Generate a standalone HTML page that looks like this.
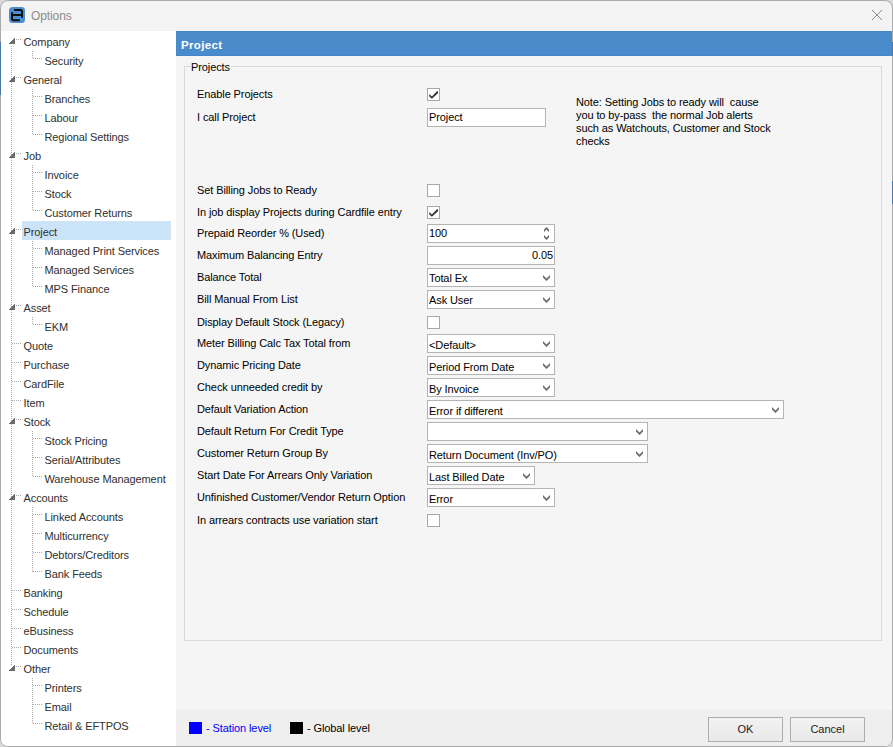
<!DOCTYPE html>
<html><head><meta charset="utf-8"><style>
*{margin:0;padding:0;box-sizing:border-box}
html,body{width:893px;height:747px;overflow:hidden;background:#d9d9d9;font-family:"Liberation Sans", sans-serif}
.t{position:absolute;white-space:pre;font-family:"Liberation Sans", sans-serif;letter-spacing:-0.1px}
#win{position:absolute;left:0;top:0;width:893px;height:747px;border:1px solid #ababab;border-radius:8px;overflow:hidden;background:#f3f3f3}
#tree{position:absolute;left:0;top:30px;width:175px;height:716px;background:#fff}
#panel{position:absolute;left:175px;top:30px;width:716px;height:679px;background:#f5f5f5}
#foot{position:absolute;left:175px;top:709px;width:716px;height:36px;background:#efefef}
.cb{position:absolute;width:13px;height:13px;border:1px solid #a8a8a8;background:#fff}
.in{position:absolute;height:19px;border:1px solid #b4b4b4;background:#fff}
.btn{position:absolute;width:75px;height:25px;border:1px solid #adadad;background:linear-gradient(#f2f2f2,#e9e9e9);font-size:11px;line-height:23px;text-align:center;color:#222}
</style></head><body>
<div id="win">
 <svg style="position:absolute;left:8px;top:6px" width="16" height="16" viewBox="0 0 16 16">
  <rect x="0" y="0" width="16" height="16" rx="3.5" fill="#4a8fd3"/>
  <path d="M5 3 H11.5 Q13 3 13 4.5 V10.8 M2.5 8 H12.5 M3 5.2 V11.5 Q3 13.2 4.8 13.2 H10.8" fill="none" stroke="#0a0f0a" stroke-width="2"/>
 </svg>
 <div class="t" style="left:30px;top:8px;font-size:12px;line-height:14px;color:#8c8c8c">Options</div>
 <svg style="position:absolute;left:870px;top:8px" width="12" height="12"><path d="M1 1 L11 11 M11 1 L1 11" stroke="#8a8a8a" stroke-width="1"/></svg>
 <div id="tree"></div>

 <div id="panel"></div>
 <div id="foot"></div>
</div>
<div id="content" style="position:absolute;left:0;top:0;width:893px;height:747px">
<div style="position:absolute;left:0;top:42px;width:1px;height:53px;background:#4a78ad"></div>
<div style="position:absolute;left:892px;top:42px;width:1px;height:14px;background:#4a78ad"></div>
<div style="position:absolute;left:892px;top:181px;width:1px;height:23px;background:#4a78ad"></div>
<div style="position:absolute;left:22px;top:221px;width:149px;height:19px;background:#cce4f7"></div><div class="t" style="left:23.5px;top:36px;font-size:11px;line-height:12px;color:#303030;font-weight:normal;">Company</div><div class="t" style="left:44.5px;top:55px;font-size:11px;line-height:12px;color:#303030;font-weight:normal;">Security</div><div class="t" style="left:23.5px;top:74px;font-size:11px;line-height:12px;color:#303030;font-weight:normal;">General</div><div class="t" style="left:44.5px;top:93px;font-size:11px;line-height:12px;color:#303030;font-weight:normal;">Branches</div><div class="t" style="left:44.5px;top:112px;font-size:11px;line-height:12px;color:#303030;font-weight:normal;">Labour</div><div class="t" style="left:44.5px;top:131px;font-size:11px;line-height:12px;color:#303030;font-weight:normal;">Regional Settings</div><div class="t" style="left:23.5px;top:150px;font-size:11px;line-height:12px;color:#303030;font-weight:normal;">Job</div><div class="t" style="left:44.5px;top:169px;font-size:11px;line-height:12px;color:#303030;font-weight:normal;">Invoice</div><div class="t" style="left:44.5px;top:188px;font-size:11px;line-height:12px;color:#303030;font-weight:normal;">Stock</div><div class="t" style="left:44.5px;top:207px;font-size:11px;line-height:12px;color:#303030;font-weight:normal;">Customer Returns</div><div class="t" style="left:23.5px;top:226px;font-size:11px;line-height:12px;color:#303030;font-weight:normal;">Project</div><div class="t" style="left:44.5px;top:245px;font-size:11px;line-height:12px;color:#303030;font-weight:normal;">Managed Print Services</div><div class="t" style="left:44.5px;top:264px;font-size:11px;line-height:12px;color:#303030;font-weight:normal;">Managed Services</div><div class="t" style="left:44.5px;top:283px;font-size:11px;line-height:12px;color:#303030;font-weight:normal;">MPS Finance</div><div class="t" style="left:23.5px;top:302px;font-size:11px;line-height:12px;color:#303030;font-weight:normal;">Asset</div><div class="t" style="left:44.5px;top:321px;font-size:11px;line-height:12px;color:#303030;font-weight:normal;">EKM</div><div class="t" style="left:23.5px;top:340px;font-size:11px;line-height:12px;color:#303030;font-weight:normal;">Quote</div><div class="t" style="left:23.5px;top:359px;font-size:11px;line-height:12px;color:#303030;font-weight:normal;">Purchase</div><div class="t" style="left:23.5px;top:378px;font-size:11px;line-height:12px;color:#303030;font-weight:normal;">CardFile</div><div class="t" style="left:23.5px;top:397px;font-size:11px;line-height:12px;color:#303030;font-weight:normal;">Item</div><div class="t" style="left:23.5px;top:416px;font-size:11px;line-height:12px;color:#303030;font-weight:normal;">Stock</div><div class="t" style="left:44.5px;top:435px;font-size:11px;line-height:12px;color:#303030;font-weight:normal;">Stock Pricing</div><div class="t" style="left:44.5px;top:454px;font-size:11px;line-height:12px;color:#303030;font-weight:normal;">Serial/Attributes</div><div class="t" style="left:44.5px;top:473px;font-size:11px;line-height:12px;color:#303030;font-weight:normal;">Warehouse Management</div><div class="t" style="left:23.5px;top:492px;font-size:11px;line-height:12px;color:#303030;font-weight:normal;">Accounts</div><div class="t" style="left:44.5px;top:511px;font-size:11px;line-height:12px;color:#303030;font-weight:normal;">Linked Accounts</div><div class="t" style="left:44.5px;top:530px;font-size:11px;line-height:12px;color:#303030;font-weight:normal;">Multicurrency</div><div class="t" style="left:44.5px;top:549px;font-size:11px;line-height:12px;color:#303030;font-weight:normal;">Debtors/Creditors</div><div class="t" style="left:44.5px;top:568px;font-size:11px;line-height:12px;color:#303030;font-weight:normal;">Bank Feeds</div><div class="t" style="left:23.5px;top:587px;font-size:11px;line-height:12px;color:#303030;font-weight:normal;">Banking</div><div class="t" style="left:23.5px;top:606px;font-size:11px;line-height:12px;color:#303030;font-weight:normal;">Schedule</div><div class="t" style="left:23.5px;top:625px;font-size:11px;line-height:12px;color:#303030;font-weight:normal;">eBusiness</div><div class="t" style="left:23.5px;top:644px;font-size:11px;line-height:12px;color:#303030;font-weight:normal;">Documents</div><div class="t" style="left:23.5px;top:663px;font-size:11px;line-height:12px;color:#303030;font-weight:normal;">Other</div><div class="t" style="left:44.5px;top:682px;font-size:11px;line-height:12px;color:#303030;font-weight:normal;">Printers</div><div class="t" style="left:44.5px;top:701px;font-size:11px;line-height:12px;color:#303030;font-weight:normal;">Email</div><div class="t" style="left:44.5px;top:720px;font-size:11px;line-height:12px;color:#303030;font-weight:normal;">Retail &amp; EFTPOS</div><svg style="position:absolute;left:0;top:0" width="176" height="747" shape-rendering="crispEdges"><g fill="#aaaaaa"><rect x="16" y="39" width="1" height="1"/><rect x="18" y="39" width="1" height="1"/><rect x="20" y="39" width="1" height="1"/><rect x="33" y="58" width="1" height="1"/><rect x="35" y="58" width="1" height="1"/><rect x="37" y="58" width="1" height="1"/><rect x="39" y="58" width="1" height="1"/><rect x="41" y="58" width="1" height="1"/><rect x="16" y="77" width="1" height="1"/><rect x="18" y="77" width="1" height="1"/><rect x="20" y="77" width="1" height="1"/><rect x="33" y="96" width="1" height="1"/><rect x="35" y="96" width="1" height="1"/><rect x="37" y="96" width="1" height="1"/><rect x="39" y="96" width="1" height="1"/><rect x="41" y="96" width="1" height="1"/><rect x="33" y="115" width="1" height="1"/><rect x="35" y="115" width="1" height="1"/><rect x="37" y="115" width="1" height="1"/><rect x="39" y="115" width="1" height="1"/><rect x="41" y="115" width="1" height="1"/><rect x="33" y="134" width="1" height="1"/><rect x="35" y="134" width="1" height="1"/><rect x="37" y="134" width="1" height="1"/><rect x="39" y="134" width="1" height="1"/><rect x="41" y="134" width="1" height="1"/><rect x="16" y="153" width="1" height="1"/><rect x="18" y="153" width="1" height="1"/><rect x="20" y="153" width="1" height="1"/><rect x="33" y="172" width="1" height="1"/><rect x="35" y="172" width="1" height="1"/><rect x="37" y="172" width="1" height="1"/><rect x="39" y="172" width="1" height="1"/><rect x="41" y="172" width="1" height="1"/><rect x="33" y="191" width="1" height="1"/><rect x="35" y="191" width="1" height="1"/><rect x="37" y="191" width="1" height="1"/><rect x="39" y="191" width="1" height="1"/><rect x="41" y="191" width="1" height="1"/><rect x="33" y="210" width="1" height="1"/><rect x="35" y="210" width="1" height="1"/><rect x="37" y="210" width="1" height="1"/><rect x="39" y="210" width="1" height="1"/><rect x="41" y="210" width="1" height="1"/><rect x="16" y="229" width="1" height="1"/><rect x="18" y="229" width="1" height="1"/><rect x="20" y="229" width="1" height="1"/><rect x="33" y="248" width="1" height="1"/><rect x="35" y="248" width="1" height="1"/><rect x="37" y="248" width="1" height="1"/><rect x="39" y="248" width="1" height="1"/><rect x="41" y="248" width="1" height="1"/><rect x="33" y="267" width="1" height="1"/><rect x="35" y="267" width="1" height="1"/><rect x="37" y="267" width="1" height="1"/><rect x="39" y="267" width="1" height="1"/><rect x="41" y="267" width="1" height="1"/><rect x="33" y="286" width="1" height="1"/><rect x="35" y="286" width="1" height="1"/><rect x="37" y="286" width="1" height="1"/><rect x="39" y="286" width="1" height="1"/><rect x="41" y="286" width="1" height="1"/><rect x="16" y="305" width="1" height="1"/><rect x="18" y="305" width="1" height="1"/><rect x="20" y="305" width="1" height="1"/><rect x="33" y="324" width="1" height="1"/><rect x="35" y="324" width="1" height="1"/><rect x="37" y="324" width="1" height="1"/><rect x="39" y="324" width="1" height="1"/><rect x="41" y="324" width="1" height="1"/><rect x="12" y="343" width="1" height="1"/><rect x="14" y="343" width="1" height="1"/><rect x="16" y="343" width="1" height="1"/><rect x="18" y="343" width="1" height="1"/><rect x="20" y="343" width="1" height="1"/><rect x="12" y="362" width="1" height="1"/><rect x="14" y="362" width="1" height="1"/><rect x="16" y="362" width="1" height="1"/><rect x="18" y="362" width="1" height="1"/><rect x="20" y="362" width="1" height="1"/><rect x="12" y="381" width="1" height="1"/><rect x="14" y="381" width="1" height="1"/><rect x="16" y="381" width="1" height="1"/><rect x="18" y="381" width="1" height="1"/><rect x="20" y="381" width="1" height="1"/><rect x="12" y="400" width="1" height="1"/><rect x="14" y="400" width="1" height="1"/><rect x="16" y="400" width="1" height="1"/><rect x="18" y="400" width="1" height="1"/><rect x="20" y="400" width="1" height="1"/><rect x="16" y="419" width="1" height="1"/><rect x="18" y="419" width="1" height="1"/><rect x="20" y="419" width="1" height="1"/><rect x="33" y="438" width="1" height="1"/><rect x="35" y="438" width="1" height="1"/><rect x="37" y="438" width="1" height="1"/><rect x="39" y="438" width="1" height="1"/><rect x="41" y="438" width="1" height="1"/><rect x="33" y="457" width="1" height="1"/><rect x="35" y="457" width="1" height="1"/><rect x="37" y="457" width="1" height="1"/><rect x="39" y="457" width="1" height="1"/><rect x="41" y="457" width="1" height="1"/><rect x="33" y="476" width="1" height="1"/><rect x="35" y="476" width="1" height="1"/><rect x="37" y="476" width="1" height="1"/><rect x="39" y="476" width="1" height="1"/><rect x="41" y="476" width="1" height="1"/><rect x="16" y="495" width="1" height="1"/><rect x="18" y="495" width="1" height="1"/><rect x="20" y="495" width="1" height="1"/><rect x="33" y="514" width="1" height="1"/><rect x="35" y="514" width="1" height="1"/><rect x="37" y="514" width="1" height="1"/><rect x="39" y="514" width="1" height="1"/><rect x="41" y="514" width="1" height="1"/><rect x="33" y="533" width="1" height="1"/><rect x="35" y="533" width="1" height="1"/><rect x="37" y="533" width="1" height="1"/><rect x="39" y="533" width="1" height="1"/><rect x="41" y="533" width="1" height="1"/><rect x="33" y="552" width="1" height="1"/><rect x="35" y="552" width="1" height="1"/><rect x="37" y="552" width="1" height="1"/><rect x="39" y="552" width="1" height="1"/><rect x="41" y="552" width="1" height="1"/><rect x="33" y="571" width="1" height="1"/><rect x="35" y="571" width="1" height="1"/><rect x="37" y="571" width="1" height="1"/><rect x="39" y="571" width="1" height="1"/><rect x="41" y="571" width="1" height="1"/><rect x="12" y="590" width="1" height="1"/><rect x="14" y="590" width="1" height="1"/><rect x="16" y="590" width="1" height="1"/><rect x="18" y="590" width="1" height="1"/><rect x="20" y="590" width="1" height="1"/><rect x="12" y="609" width="1" height="1"/><rect x="14" y="609" width="1" height="1"/><rect x="16" y="609" width="1" height="1"/><rect x="18" y="609" width="1" height="1"/><rect x="20" y="609" width="1" height="1"/><rect x="12" y="628" width="1" height="1"/><rect x="14" y="628" width="1" height="1"/><rect x="16" y="628" width="1" height="1"/><rect x="18" y="628" width="1" height="1"/><rect x="20" y="628" width="1" height="1"/><rect x="12" y="647" width="1" height="1"/><rect x="14" y="647" width="1" height="1"/><rect x="16" y="647" width="1" height="1"/><rect x="18" y="647" width="1" height="1"/><rect x="20" y="647" width="1" height="1"/><rect x="16" y="666" width="1" height="1"/><rect x="18" y="666" width="1" height="1"/><rect x="20" y="666" width="1" height="1"/><rect x="33" y="685" width="1" height="1"/><rect x="35" y="685" width="1" height="1"/><rect x="37" y="685" width="1" height="1"/><rect x="39" y="685" width="1" height="1"/><rect x="41" y="685" width="1" height="1"/><rect x="33" y="704" width="1" height="1"/><rect x="35" y="704" width="1" height="1"/><rect x="37" y="704" width="1" height="1"/><rect x="39" y="704" width="1" height="1"/><rect x="41" y="704" width="1" height="1"/><rect x="33" y="723" width="1" height="1"/><rect x="35" y="723" width="1" height="1"/><rect x="37" y="723" width="1" height="1"/><rect x="39" y="723" width="1" height="1"/><rect x="41" y="723" width="1" height="1"/><rect x="11" y="46" width="1" height="1"/><rect x="11" y="48" width="1" height="1"/><rect x="11" y="50" width="1" height="1"/><rect x="11" y="52" width="1" height="1"/><rect x="11" y="54" width="1" height="1"/><rect x="11" y="56" width="1" height="1"/><rect x="11" y="58" width="1" height="1"/><rect x="11" y="60" width="1" height="1"/><rect x="11" y="62" width="1" height="1"/><rect x="11" y="64" width="1" height="1"/><rect x="11" y="66" width="1" height="1"/><rect x="11" y="68" width="1" height="1"/><rect x="11" y="70" width="1" height="1"/><rect x="11" y="72" width="1" height="1"/><rect x="11" y="74" width="1" height="1"/><rect x="11" y="76" width="1" height="1"/><rect x="11" y="78" width="1" height="1"/><rect x="11" y="80" width="1" height="1"/><rect x="11" y="82" width="1" height="1"/><rect x="11" y="84" width="1" height="1"/><rect x="11" y="86" width="1" height="1"/><rect x="11" y="88" width="1" height="1"/><rect x="11" y="90" width="1" height="1"/><rect x="11" y="92" width="1" height="1"/><rect x="11" y="94" width="1" height="1"/><rect x="11" y="96" width="1" height="1"/><rect x="11" y="98" width="1" height="1"/><rect x="11" y="100" width="1" height="1"/><rect x="11" y="102" width="1" height="1"/><rect x="11" y="104" width="1" height="1"/><rect x="11" y="106" width="1" height="1"/><rect x="11" y="108" width="1" height="1"/><rect x="11" y="110" width="1" height="1"/><rect x="11" y="112" width="1" height="1"/><rect x="11" y="114" width="1" height="1"/><rect x="11" y="116" width="1" height="1"/><rect x="11" y="118" width="1" height="1"/><rect x="11" y="120" width="1" height="1"/><rect x="11" y="122" width="1" height="1"/><rect x="11" y="124" width="1" height="1"/><rect x="11" y="126" width="1" height="1"/><rect x="11" y="128" width="1" height="1"/><rect x="11" y="130" width="1" height="1"/><rect x="11" y="132" width="1" height="1"/><rect x="11" y="134" width="1" height="1"/><rect x="11" y="136" width="1" height="1"/><rect x="11" y="138" width="1" height="1"/><rect x="11" y="140" width="1" height="1"/><rect x="11" y="142" width="1" height="1"/><rect x="11" y="144" width="1" height="1"/><rect x="11" y="146" width="1" height="1"/><rect x="11" y="148" width="1" height="1"/><rect x="11" y="150" width="1" height="1"/><rect x="11" y="152" width="1" height="1"/><rect x="11" y="154" width="1" height="1"/><rect x="11" y="156" width="1" height="1"/><rect x="11" y="158" width="1" height="1"/><rect x="11" y="160" width="1" height="1"/><rect x="11" y="162" width="1" height="1"/><rect x="11" y="164" width="1" height="1"/><rect x="11" y="166" width="1" height="1"/><rect x="11" y="168" width="1" height="1"/><rect x="11" y="170" width="1" height="1"/><rect x="11" y="172" width="1" height="1"/><rect x="11" y="174" width="1" height="1"/><rect x="11" y="176" width="1" height="1"/><rect x="11" y="178" width="1" height="1"/><rect x="11" y="180" width="1" height="1"/><rect x="11" y="182" width="1" height="1"/><rect x="11" y="184" width="1" height="1"/><rect x="11" y="186" width="1" height="1"/><rect x="11" y="188" width="1" height="1"/><rect x="11" y="190" width="1" height="1"/><rect x="11" y="192" width="1" height="1"/><rect x="11" y="194" width="1" height="1"/><rect x="11" y="196" width="1" height="1"/><rect x="11" y="198" width="1" height="1"/><rect x="11" y="200" width="1" height="1"/><rect x="11" y="202" width="1" height="1"/><rect x="11" y="204" width="1" height="1"/><rect x="11" y="206" width="1" height="1"/><rect x="11" y="208" width="1" height="1"/><rect x="11" y="210" width="1" height="1"/><rect x="11" y="212" width="1" height="1"/><rect x="11" y="214" width="1" height="1"/><rect x="11" y="216" width="1" height="1"/><rect x="11" y="218" width="1" height="1"/><rect x="11" y="220" width="1" height="1"/><rect x="11" y="222" width="1" height="1"/><rect x="11" y="224" width="1" height="1"/><rect x="11" y="226" width="1" height="1"/><rect x="11" y="228" width="1" height="1"/><rect x="11" y="230" width="1" height="1"/><rect x="11" y="232" width="1" height="1"/><rect x="11" y="234" width="1" height="1"/><rect x="11" y="236" width="1" height="1"/><rect x="11" y="238" width="1" height="1"/><rect x="11" y="240" width="1" height="1"/><rect x="11" y="242" width="1" height="1"/><rect x="11" y="244" width="1" height="1"/><rect x="11" y="246" width="1" height="1"/><rect x="11" y="248" width="1" height="1"/><rect x="11" y="250" width="1" height="1"/><rect x="11" y="252" width="1" height="1"/><rect x="11" y="254" width="1" height="1"/><rect x="11" y="256" width="1" height="1"/><rect x="11" y="258" width="1" height="1"/><rect x="11" y="260" width="1" height="1"/><rect x="11" y="262" width="1" height="1"/><rect x="11" y="264" width="1" height="1"/><rect x="11" y="266" width="1" height="1"/><rect x="11" y="268" width="1" height="1"/><rect x="11" y="270" width="1" height="1"/><rect x="11" y="272" width="1" height="1"/><rect x="11" y="274" width="1" height="1"/><rect x="11" y="276" width="1" height="1"/><rect x="11" y="278" width="1" height="1"/><rect x="11" y="280" width="1" height="1"/><rect x="11" y="282" width="1" height="1"/><rect x="11" y="284" width="1" height="1"/><rect x="11" y="286" width="1" height="1"/><rect x="11" y="288" width="1" height="1"/><rect x="11" y="290" width="1" height="1"/><rect x="11" y="292" width="1" height="1"/><rect x="11" y="294" width="1" height="1"/><rect x="11" y="296" width="1" height="1"/><rect x="11" y="298" width="1" height="1"/><rect x="11" y="300" width="1" height="1"/><rect x="11" y="302" width="1" height="1"/><rect x="11" y="304" width="1" height="1"/><rect x="11" y="306" width="1" height="1"/><rect x="11" y="308" width="1" height="1"/><rect x="11" y="310" width="1" height="1"/><rect x="11" y="312" width="1" height="1"/><rect x="11" y="314" width="1" height="1"/><rect x="11" y="316" width="1" height="1"/><rect x="11" y="318" width="1" height="1"/><rect x="11" y="320" width="1" height="1"/><rect x="11" y="322" width="1" height="1"/><rect x="11" y="324" width="1" height="1"/><rect x="11" y="326" width="1" height="1"/><rect x="11" y="328" width="1" height="1"/><rect x="11" y="330" width="1" height="1"/><rect x="11" y="332" width="1" height="1"/><rect x="11" y="334" width="1" height="1"/><rect x="11" y="336" width="1" height="1"/><rect x="11" y="338" width="1" height="1"/><rect x="11" y="340" width="1" height="1"/><rect x="11" y="342" width="1" height="1"/><rect x="11" y="344" width="1" height="1"/><rect x="11" y="346" width="1" height="1"/><rect x="11" y="348" width="1" height="1"/><rect x="11" y="350" width="1" height="1"/><rect x="11" y="352" width="1" height="1"/><rect x="11" y="354" width="1" height="1"/><rect x="11" y="356" width="1" height="1"/><rect x="11" y="358" width="1" height="1"/><rect x="11" y="360" width="1" height="1"/><rect x="11" y="362" width="1" height="1"/><rect x="11" y="364" width="1" height="1"/><rect x="11" y="366" width="1" height="1"/><rect x="11" y="368" width="1" height="1"/><rect x="11" y="370" width="1" height="1"/><rect x="11" y="372" width="1" height="1"/><rect x="11" y="374" width="1" height="1"/><rect x="11" y="376" width="1" height="1"/><rect x="11" y="378" width="1" height="1"/><rect x="11" y="380" width="1" height="1"/><rect x="11" y="382" width="1" height="1"/><rect x="11" y="384" width="1" height="1"/><rect x="11" y="386" width="1" height="1"/><rect x="11" y="388" width="1" height="1"/><rect x="11" y="390" width="1" height="1"/><rect x="11" y="392" width="1" height="1"/><rect x="11" y="394" width="1" height="1"/><rect x="11" y="396" width="1" height="1"/><rect x="11" y="398" width="1" height="1"/><rect x="11" y="400" width="1" height="1"/><rect x="11" y="402" width="1" height="1"/><rect x="11" y="404" width="1" height="1"/><rect x="11" y="406" width="1" height="1"/><rect x="11" y="408" width="1" height="1"/><rect x="11" y="410" width="1" height="1"/><rect x="11" y="412" width="1" height="1"/><rect x="11" y="414" width="1" height="1"/><rect x="11" y="416" width="1" height="1"/><rect x="11" y="418" width="1" height="1"/><rect x="11" y="420" width="1" height="1"/><rect x="11" y="422" width="1" height="1"/><rect x="11" y="424" width="1" height="1"/><rect x="11" y="426" width="1" height="1"/><rect x="11" y="428" width="1" height="1"/><rect x="11" y="430" width="1" height="1"/><rect x="11" y="432" width="1" height="1"/><rect x="11" y="434" width="1" height="1"/><rect x="11" y="436" width="1" height="1"/><rect x="11" y="438" width="1" height="1"/><rect x="11" y="440" width="1" height="1"/><rect x="11" y="442" width="1" height="1"/><rect x="11" y="444" width="1" height="1"/><rect x="11" y="446" width="1" height="1"/><rect x="11" y="448" width="1" height="1"/><rect x="11" y="450" width="1" height="1"/><rect x="11" y="452" width="1" height="1"/><rect x="11" y="454" width="1" height="1"/><rect x="11" y="456" width="1" height="1"/><rect x="11" y="458" width="1" height="1"/><rect x="11" y="460" width="1" height="1"/><rect x="11" y="462" width="1" height="1"/><rect x="11" y="464" width="1" height="1"/><rect x="11" y="466" width="1" height="1"/><rect x="11" y="468" width="1" height="1"/><rect x="11" y="470" width="1" height="1"/><rect x="11" y="472" width="1" height="1"/><rect x="11" y="474" width="1" height="1"/><rect x="11" y="476" width="1" height="1"/><rect x="11" y="478" width="1" height="1"/><rect x="11" y="480" width="1" height="1"/><rect x="11" y="482" width="1" height="1"/><rect x="11" y="484" width="1" height="1"/><rect x="11" y="486" width="1" height="1"/><rect x="11" y="488" width="1" height="1"/><rect x="11" y="490" width="1" height="1"/><rect x="11" y="492" width="1" height="1"/><rect x="11" y="494" width="1" height="1"/><rect x="11" y="496" width="1" height="1"/><rect x="11" y="498" width="1" height="1"/><rect x="11" y="500" width="1" height="1"/><rect x="11" y="502" width="1" height="1"/><rect x="11" y="504" width="1" height="1"/><rect x="11" y="506" width="1" height="1"/><rect x="11" y="508" width="1" height="1"/><rect x="11" y="510" width="1" height="1"/><rect x="11" y="512" width="1" height="1"/><rect x="11" y="514" width="1" height="1"/><rect x="11" y="516" width="1" height="1"/><rect x="11" y="518" width="1" height="1"/><rect x="11" y="520" width="1" height="1"/><rect x="11" y="522" width="1" height="1"/><rect x="11" y="524" width="1" height="1"/><rect x="11" y="526" width="1" height="1"/><rect x="11" y="528" width="1" height="1"/><rect x="11" y="530" width="1" height="1"/><rect x="11" y="532" width="1" height="1"/><rect x="11" y="534" width="1" height="1"/><rect x="11" y="536" width="1" height="1"/><rect x="11" y="538" width="1" height="1"/><rect x="11" y="540" width="1" height="1"/><rect x="11" y="542" width="1" height="1"/><rect x="11" y="544" width="1" height="1"/><rect x="11" y="546" width="1" height="1"/><rect x="11" y="548" width="1" height="1"/><rect x="11" y="550" width="1" height="1"/><rect x="11" y="552" width="1" height="1"/><rect x="11" y="554" width="1" height="1"/><rect x="11" y="556" width="1" height="1"/><rect x="11" y="558" width="1" height="1"/><rect x="11" y="560" width="1" height="1"/><rect x="11" y="562" width="1" height="1"/><rect x="11" y="564" width="1" height="1"/><rect x="11" y="566" width="1" height="1"/><rect x="11" y="568" width="1" height="1"/><rect x="11" y="570" width="1" height="1"/><rect x="11" y="572" width="1" height="1"/><rect x="11" y="574" width="1" height="1"/><rect x="11" y="576" width="1" height="1"/><rect x="11" y="578" width="1" height="1"/><rect x="11" y="580" width="1" height="1"/><rect x="11" y="582" width="1" height="1"/><rect x="11" y="584" width="1" height="1"/><rect x="11" y="586" width="1" height="1"/><rect x="11" y="588" width="1" height="1"/><rect x="11" y="590" width="1" height="1"/><rect x="11" y="592" width="1" height="1"/><rect x="11" y="594" width="1" height="1"/><rect x="11" y="596" width="1" height="1"/><rect x="11" y="598" width="1" height="1"/><rect x="11" y="600" width="1" height="1"/><rect x="11" y="602" width="1" height="1"/><rect x="11" y="604" width="1" height="1"/><rect x="11" y="606" width="1" height="1"/><rect x="11" y="608" width="1" height="1"/><rect x="11" y="610" width="1" height="1"/><rect x="11" y="612" width="1" height="1"/><rect x="11" y="614" width="1" height="1"/><rect x="11" y="616" width="1" height="1"/><rect x="11" y="618" width="1" height="1"/><rect x="11" y="620" width="1" height="1"/><rect x="11" y="622" width="1" height="1"/><rect x="11" y="624" width="1" height="1"/><rect x="11" y="626" width="1" height="1"/><rect x="11" y="628" width="1" height="1"/><rect x="11" y="630" width="1" height="1"/><rect x="11" y="632" width="1" height="1"/><rect x="11" y="634" width="1" height="1"/><rect x="11" y="636" width="1" height="1"/><rect x="11" y="638" width="1" height="1"/><rect x="11" y="640" width="1" height="1"/><rect x="11" y="642" width="1" height="1"/><rect x="11" y="644" width="1" height="1"/><rect x="11" y="646" width="1" height="1"/><rect x="11" y="648" width="1" height="1"/><rect x="11" y="650" width="1" height="1"/><rect x="11" y="652" width="1" height="1"/><rect x="11" y="654" width="1" height="1"/><rect x="11" y="656" width="1" height="1"/><rect x="11" y="658" width="1" height="1"/><rect x="11" y="660" width="1" height="1"/><rect x="11" y="662" width="1" height="1"/><rect x="11" y="664" width="1" height="1"/><rect x="32" y="51" width="1" height="1"/><rect x="32" y="53" width="1" height="1"/><rect x="32" y="55" width="1" height="1"/><rect x="32" y="57" width="1" height="1"/><rect x="32" y="89" width="1" height="1"/><rect x="32" y="91" width="1" height="1"/><rect x="32" y="93" width="1" height="1"/><rect x="32" y="95" width="1" height="1"/><rect x="32" y="97" width="1" height="1"/><rect x="32" y="99" width="1" height="1"/><rect x="32" y="101" width="1" height="1"/><rect x="32" y="103" width="1" height="1"/><rect x="32" y="105" width="1" height="1"/><rect x="32" y="107" width="1" height="1"/><rect x="32" y="109" width="1" height="1"/><rect x="32" y="111" width="1" height="1"/><rect x="32" y="113" width="1" height="1"/><rect x="32" y="115" width="1" height="1"/><rect x="32" y="117" width="1" height="1"/><rect x="32" y="119" width="1" height="1"/><rect x="32" y="121" width="1" height="1"/><rect x="32" y="123" width="1" height="1"/><rect x="32" y="125" width="1" height="1"/><rect x="32" y="127" width="1" height="1"/><rect x="32" y="129" width="1" height="1"/><rect x="32" y="131" width="1" height="1"/><rect x="32" y="133" width="1" height="1"/><rect x="32" y="165" width="1" height="1"/><rect x="32" y="167" width="1" height="1"/><rect x="32" y="169" width="1" height="1"/><rect x="32" y="171" width="1" height="1"/><rect x="32" y="173" width="1" height="1"/><rect x="32" y="175" width="1" height="1"/><rect x="32" y="177" width="1" height="1"/><rect x="32" y="179" width="1" height="1"/><rect x="32" y="181" width="1" height="1"/><rect x="32" y="183" width="1" height="1"/><rect x="32" y="185" width="1" height="1"/><rect x="32" y="187" width="1" height="1"/><rect x="32" y="189" width="1" height="1"/><rect x="32" y="191" width="1" height="1"/><rect x="32" y="193" width="1" height="1"/><rect x="32" y="195" width="1" height="1"/><rect x="32" y="197" width="1" height="1"/><rect x="32" y="199" width="1" height="1"/><rect x="32" y="201" width="1" height="1"/><rect x="32" y="203" width="1" height="1"/><rect x="32" y="205" width="1" height="1"/><rect x="32" y="207" width="1" height="1"/><rect x="32" y="209" width="1" height="1"/><rect x="32" y="241" width="1" height="1"/><rect x="32" y="243" width="1" height="1"/><rect x="32" y="245" width="1" height="1"/><rect x="32" y="247" width="1" height="1"/><rect x="32" y="249" width="1" height="1"/><rect x="32" y="251" width="1" height="1"/><rect x="32" y="253" width="1" height="1"/><rect x="32" y="255" width="1" height="1"/><rect x="32" y="257" width="1" height="1"/><rect x="32" y="259" width="1" height="1"/><rect x="32" y="261" width="1" height="1"/><rect x="32" y="263" width="1" height="1"/><rect x="32" y="265" width="1" height="1"/><rect x="32" y="267" width="1" height="1"/><rect x="32" y="269" width="1" height="1"/><rect x="32" y="271" width="1" height="1"/><rect x="32" y="273" width="1" height="1"/><rect x="32" y="275" width="1" height="1"/><rect x="32" y="277" width="1" height="1"/><rect x="32" y="279" width="1" height="1"/><rect x="32" y="281" width="1" height="1"/><rect x="32" y="283" width="1" height="1"/><rect x="32" y="285" width="1" height="1"/><rect x="32" y="317" width="1" height="1"/><rect x="32" y="319" width="1" height="1"/><rect x="32" y="321" width="1" height="1"/><rect x="32" y="323" width="1" height="1"/><rect x="32" y="431" width="1" height="1"/><rect x="32" y="433" width="1" height="1"/><rect x="32" y="435" width="1" height="1"/><rect x="32" y="437" width="1" height="1"/><rect x="32" y="439" width="1" height="1"/><rect x="32" y="441" width="1" height="1"/><rect x="32" y="443" width="1" height="1"/><rect x="32" y="445" width="1" height="1"/><rect x="32" y="447" width="1" height="1"/><rect x="32" y="449" width="1" height="1"/><rect x="32" y="451" width="1" height="1"/><rect x="32" y="453" width="1" height="1"/><rect x="32" y="455" width="1" height="1"/><rect x="32" y="457" width="1" height="1"/><rect x="32" y="459" width="1" height="1"/><rect x="32" y="461" width="1" height="1"/><rect x="32" y="463" width="1" height="1"/><rect x="32" y="465" width="1" height="1"/><rect x="32" y="467" width="1" height="1"/><rect x="32" y="469" width="1" height="1"/><rect x="32" y="471" width="1" height="1"/><rect x="32" y="473" width="1" height="1"/><rect x="32" y="475" width="1" height="1"/><rect x="32" y="507" width="1" height="1"/><rect x="32" y="509" width="1" height="1"/><rect x="32" y="511" width="1" height="1"/><rect x="32" y="513" width="1" height="1"/><rect x="32" y="515" width="1" height="1"/><rect x="32" y="517" width="1" height="1"/><rect x="32" y="519" width="1" height="1"/><rect x="32" y="521" width="1" height="1"/><rect x="32" y="523" width="1" height="1"/><rect x="32" y="525" width="1" height="1"/><rect x="32" y="527" width="1" height="1"/><rect x="32" y="529" width="1" height="1"/><rect x="32" y="531" width="1" height="1"/><rect x="32" y="533" width="1" height="1"/><rect x="32" y="535" width="1" height="1"/><rect x="32" y="537" width="1" height="1"/><rect x="32" y="539" width="1" height="1"/><rect x="32" y="541" width="1" height="1"/><rect x="32" y="543" width="1" height="1"/><rect x="32" y="545" width="1" height="1"/><rect x="32" y="547" width="1" height="1"/><rect x="32" y="549" width="1" height="1"/><rect x="32" y="551" width="1" height="1"/><rect x="32" y="553" width="1" height="1"/><rect x="32" y="555" width="1" height="1"/><rect x="32" y="557" width="1" height="1"/><rect x="32" y="559" width="1" height="1"/><rect x="32" y="561" width="1" height="1"/><rect x="32" y="563" width="1" height="1"/><rect x="32" y="565" width="1" height="1"/><rect x="32" y="567" width="1" height="1"/><rect x="32" y="569" width="1" height="1"/><rect x="32" y="571" width="1" height="1"/><rect x="32" y="678" width="1" height="1"/><rect x="32" y="680" width="1" height="1"/><rect x="32" y="682" width="1" height="1"/><rect x="32" y="684" width="1" height="1"/><rect x="32" y="686" width="1" height="1"/><rect x="32" y="688" width="1" height="1"/><rect x="32" y="690" width="1" height="1"/><rect x="32" y="692" width="1" height="1"/><rect x="32" y="694" width="1" height="1"/><rect x="32" y="696" width="1" height="1"/><rect x="32" y="698" width="1" height="1"/><rect x="32" y="700" width="1" height="1"/><rect x="32" y="702" width="1" height="1"/><rect x="32" y="704" width="1" height="1"/><rect x="32" y="706" width="1" height="1"/><rect x="32" y="708" width="1" height="1"/><rect x="32" y="710" width="1" height="1"/><rect x="32" y="712" width="1" height="1"/><rect x="32" y="714" width="1" height="1"/><rect x="32" y="716" width="1" height="1"/><rect x="32" y="718" width="1" height="1"/><rect x="32" y="720" width="1" height="1"/><rect x="32" y="722" width="1" height="1"/></g><polygon fill="#6b6b6b" points="8.6,44 15,44 15,37.6"/><polygon fill="#6b6b6b" points="8.6,82 15,82 15,75.6"/><polygon fill="#6b6b6b" points="8.6,158 15,158 15,151.6"/><polygon fill="#6b6b6b" points="8.6,234 15,234 15,227.6"/><polygon fill="#6b6b6b" points="8.6,310 15,310 15,303.6"/><polygon fill="#6b6b6b" points="8.6,424 15,424 15,417.6"/><polygon fill="#6b6b6b" points="8.6,500 15,500 15,493.6"/><polygon fill="#6b6b6b" points="8.6,671 15,671 15,664.6"/></svg>
<div style="position:absolute;left:176px;top:31px;width:716px;height:25px;background:#4a8ccb;border-top:1px solid #4285c8;border-bottom:1px solid #4285c8"></div>
<div class="t" style="left:181px;top:39px;font-size:11.5px;line-height:12px;color:#fff;font-weight:bold;letter-spacing:0.35px">Project</div>
<div style="position:absolute;left:184px;top:66px;width:698px;height:575px;border:1px solid #d9d9d9"></div>
<div class="t" style="left:191px;top:61px;font-size:11px;line-height:12px;background:#f5f5f5;padding:0 1px 0 0">Projects</div>
<div class="t" style="left:197px;top:88px;font-size:11px;line-height:12px;color:#000;font-weight:normal;">Enable Projects</div><div class="cb" style="left:427px;top:88px"><svg width="13" height="13" style="position:absolute;left:-1px;top:-1px"><polygon points="2.3,6.0 4.9,8.4 10.2,2.9 11.0,3.5 11.0,5.3 4.9,10.7 2.3,8.5" fill="#333"/></svg></div><div class="t" style="left:197px;top:111px;font-size:11px;line-height:12px;color:#000;font-weight:normal;">I call Project</div><div class="in" style="left:427px;top:108px;width:119px"><div class="t" style="left:1px;top:2px;font-size:11px;line-height:12px">Project</div></div><div class="t" style="left:576px;top:96px;font-size:11px;line-height:12px;color:#000;font-weight:normal;">Note: Setting Jobs to ready will  cause</div><div class="t" style="left:576px;top:109px;font-size:11px;line-height:12px;color:#000;font-weight:normal;">you to by-pass  the normal Job alerts</div><div class="t" style="left:576px;top:122px;font-size:11px;line-height:12px;color:#000;font-weight:normal;">such as Watchouts, Customer and Stock</div><div class="t" style="left:576px;top:135px;font-size:11px;line-height:12px;color:#000;font-weight:normal;">checks</div><div class="t" style="left:197px;top:184px;font-size:11px;line-height:12px;color:#000;font-weight:normal;">Set Billing Jobs to Ready</div><div class="cb" style="left:427px;top:184px"></div><div class="t" style="left:197px;top:206px;font-size:11px;line-height:12px;color:#000;font-weight:normal;">In job display Projects during Cardfile entry</div><div class="cb" style="left:427px;top:206px"><svg width="13" height="13" style="position:absolute;left:-1px;top:-1px"><polygon points="2.3,6.0 4.9,8.4 10.2,2.9 11.0,3.5 11.0,5.3 4.9,10.7 2.3,8.5" fill="#333"/></svg></div><div class="t" style="left:197px;top:227px;font-size:11px;line-height:12px;color:#000;font-weight:normal;">Prepaid Reorder % (Used)</div><div class="in" style="left:427px;top:224px;width:128px"><div class="t" style="left:1px;top:2px;font-size:11px;line-height:12px">100</div><svg style="position:absolute;left:116px;top:2px" width="5" height="13"><polygon points="0,2.5 2.5,0 5,2.5 5,5 2.5,2.6 0,5" fill="#6e6e6e"/><polygon points="0,8 2.5,10.4 5,8 5,10.5 2.5,13 0,10.5" fill="#6e6e6e"/></svg></div><div class="t" style="left:197px;top:249px;font-size:11px;line-height:12px;color:#000;font-weight:normal;">Maximum Balancing Entry</div><div class="in" style="left:427px;top:246px;width:128px"><div class="t" style="right:1px;top:2px;font-size:11px;line-height:12px">0.05</div></div><div class="t" style="left:197px;top:271px;font-size:11px;line-height:12px;color:#000;font-weight:normal;">Balance Total</div><div class="in" style="left:427px;top:268px;width:128px"><div class="t" style="left:1px;top:3px;font-size:11px;line-height:12px">Total Ex</div><svg style="position:absolute;left:115px;top:6px" width="7" height="6"><polygon points="0,0 3.5,3.5 7,0 7,2.6 3.5,6.1 0,2.6" fill="#6e6e6e"/></svg></div><div class="t" style="left:197px;top:293px;font-size:11px;line-height:12px;color:#000;font-weight:normal;">Bill Manual From List</div><div class="in" style="left:427px;top:290px;width:128px"><div class="t" style="left:1px;top:3px;font-size:11px;line-height:12px">Ask User</div><svg style="position:absolute;left:115px;top:6px" width="7" height="6"><polygon points="0,0 3.5,3.5 7,0 7,2.6 3.5,6.1 0,2.6" fill="#6e6e6e"/></svg></div><div class="t" style="left:197px;top:316px;font-size:11px;line-height:12px;color:#000;font-weight:normal;">Display Default Stock (Legacy)</div><div class="cb" style="left:427px;top:316px"></div><div class="t" style="left:197px;top:337px;font-size:11px;line-height:12px;color:#000;font-weight:normal;">Meter Billing Calc Tax Total from</div><div class="in" style="left:427px;top:334px;width:128px"><div class="t" style="left:1px;top:4px;font-size:11px;line-height:12px">&lt;Default&gt;</div><svg style="position:absolute;left:115px;top:6px" width="7" height="6"><polygon points="0,0 3.5,3.5 7,0 7,2.6 3.5,6.1 0,2.6" fill="#6e6e6e"/></svg></div><div class="t" style="left:197px;top:359px;font-size:11px;line-height:12px;color:#000;font-weight:normal;">Dynamic Pricing Date</div><div class="in" style="left:427px;top:356px;width:128px"><div class="t" style="left:1px;top:4px;font-size:11px;line-height:12px">Period From Date</div><svg style="position:absolute;left:115px;top:6px" width="7" height="6"><polygon points="0,0 3.5,3.5 7,0 7,2.6 3.5,6.1 0,2.6" fill="#6e6e6e"/></svg></div><div class="t" style="left:197px;top:381px;font-size:11px;line-height:12px;color:#000;font-weight:normal;">Check unneeded credit by</div><div class="in" style="left:427px;top:378px;width:128px"><div class="t" style="left:1px;top:4px;font-size:11px;line-height:12px">By Invoice</div><svg style="position:absolute;left:115px;top:6px" width="7" height="6"><polygon points="0,0 3.5,3.5 7,0 7,2.6 3.5,6.1 0,2.6" fill="#6e6e6e"/></svg></div><div class="t" style="left:197px;top:403px;font-size:11px;line-height:12px;color:#000;font-weight:normal;">Default Variation Action</div><div class="in" style="left:427px;top:400px;width:357px"><div class="t" style="left:1px;top:4px;font-size:11px;line-height:12px">Error if different</div><svg style="position:absolute;left:344px;top:6px" width="7" height="6"><polygon points="0,0 3.5,3.5 7,0 7,2.6 3.5,6.1 0,2.6" fill="#6e6e6e"/></svg></div><div class="t" style="left:197px;top:425px;font-size:11px;line-height:12px;color:#000;font-weight:normal;">Default Return For Credit Type</div><div class="in" style="left:427px;top:422px;width:221px"><svg style="position:absolute;left:208px;top:6px" width="7" height="6"><polygon points="0,0 3.5,3.5 7,0 7,2.6 3.5,6.1 0,2.6" fill="#6e6e6e"/></svg></div><div class="t" style="left:197px;top:447px;font-size:11px;line-height:12px;color:#000;font-weight:normal;">Customer Return Group By</div><div class="in" style="left:427px;top:444px;width:221px"><div class="t" style="left:1px;top:4px;font-size:11px;line-height:12px">Return Document (Inv/PO)</div><svg style="position:absolute;left:208px;top:6px" width="7" height="6"><polygon points="0,0 3.5,3.5 7,0 7,2.6 3.5,6.1 0,2.6" fill="#6e6e6e"/></svg></div><div class="t" style="left:197px;top:469px;font-size:11px;line-height:12px;color:#000;font-weight:normal;">Start Date For Arrears Only Variation</div><div class="in" style="left:427px;top:466px;width:108px"><div class="t" style="left:1px;top:4px;font-size:11px;line-height:12px">Last Billed Date</div><svg style="position:absolute;left:95px;top:6px" width="7" height="6"><polygon points="0,0 3.5,3.5 7,0 7,2.6 3.5,6.1 0,2.6" fill="#6e6e6e"/></svg></div><div class="t" style="left:197px;top:491px;font-size:11px;line-height:12px;color:#000;font-weight:normal;">Unfinished Customer/Vendor Return Option</div><div class="in" style="left:427px;top:488px;width:128px"><div class="t" style="left:1px;top:4px;font-size:11px;line-height:12px">Error</div><svg style="position:absolute;left:115px;top:6px" width="7" height="6"><polygon points="0,0 3.5,3.5 7,0 7,2.6 3.5,6.1 0,2.6" fill="#6e6e6e"/></svg></div><div class="t" style="left:197px;top:514px;font-size:11px;line-height:12px;color:#000;font-weight:normal;">In arrears contracts use variation start</div><div class="cb" style="left:427px;top:514px"></div>
<div style="position:absolute;left:189px;top:722px;width:13px;height:12px;background:#0000ff"></div>
<div class="t" style="left:206px;top:722px;font-size:11px;line-height:12px;color:#0000ff">- Station level</div>
<div style="position:absolute;left:290px;top:722px;width:13px;height:12px;background:#000"></div>
<div class="t" style="left:307px;top:722px;font-size:11px;line-height:12px;color:#000">- Global level</div>
<div class="btn" style="left:708px;top:717px">OK</div>
<div class="btn" style="left:790px;top:717px">Cancel</div>
</div>
</body></html>
